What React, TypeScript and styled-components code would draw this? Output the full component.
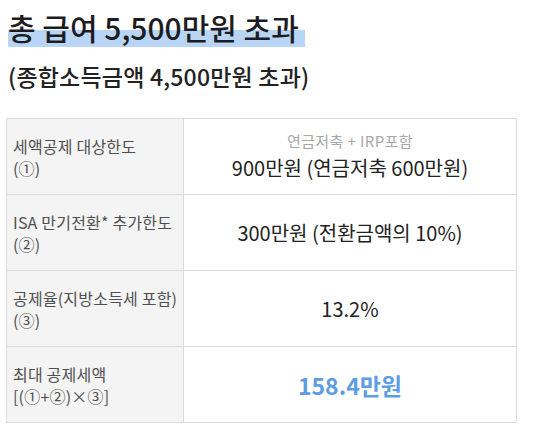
import React from "react";
import styled, { createGlobalStyle } from "styled-components";

const Global = createGlobalStyle`
  html, body { margin: 0; padding: 0; background: #fff; }
  body { font-family: "Noto Sans CJK KR", "Noto Sans", sans-serif; }
`;

const Page = styled.div`
  width: 536px;
  height: 432px;
  box-sizing: border-box;
  padding: 7px 20px 0 6px;
  display: flex;
  flex-direction: column;
`;

const Title = styled.h1`
  margin: 0 0 0 2px;
  font-size: 30px;
  font-weight: 500;
  line-height: 40px;
  color: #1d1d1f;
  letter-spacing: 0;
  align-self: flex-start;
  background: linear-gradient(transparent 57%, #b9d5f6 57%, #b9d5f6 100%);
  padding: 0 6px 0 0;
`;

const Subtitle = styled.h2`
  margin: 14px 0 0 2px;
  font-size: 23px;
  font-weight: 500;
  line-height: 30px;
  color: #222;
  letter-spacing: 0.2px;
`;

const Table = styled.div`
  margin-top: 27px;
  width: 510px;
  display: grid;
  grid-template-columns: 177px 1fr;
  border-top: 1px solid #dcdcdc;
  border-left: 1px solid #dcdcdc;
`;

const Cell = styled.div`
  height: 76px;
  box-sizing: border-box;
  border-right: 1px solid #dcdcdc;
  border-bottom: 1px solid #dcdcdc;
  display: flex;
  flex-direction: column;
  justify-content: center;
`;

const LabelCell = styled(Cell)`
  background: #f4f4f4;
  padding-left: 6px;
  font-size: 16px;
  line-height: 22px;
  color: #4f4f4f;
  letter-spacing: 0.2px;
`;

const ValueCell = styled(Cell)`
  align-items: center;
  text-align: center;
`;

const Note = styled.div`
  font-size: 15px;
  line-height: 18px;
  color: #a8a8a8;
  letter-spacing: 0.4px;
  margin-bottom: 5px;
`;

const Value = styled.div<{ $accent?: boolean }>`
  font-size: ${(p) => (p.$accent ? 23 : 20)}px;
  line-height: 26px;
  font-weight: ${(p) => (p.$accent ? 700 : 400)};
  color: ${(p) => (p.$accent ? "#5e9ce4" : "#222")};
  letter-spacing: 0;
`;

const rows = [
  { label: "세액공제 대상한도", sub: "(①)", note: "연금저축 + IRP포함", value: "900만원 (연금저축 600만원)" },
  { label: "ISA 만기전환* 추가한도", sub: "(②)", value: "300만원 (전환금액의 10%)" },
  { label: "공제율(지방소득세 포함)", sub: "(③)", value: "13.2%" },
  { label: "최대 공제세액", sub: "[(①+②)×③]", value: "158.4만원", accent: true },
];

export default function App() {
  return (
    <>
      <Global />
      <Page>
        <Title>총 급여 5,500만원 초과</Title>
        <Subtitle>(종합소득금액 4,500만원 초과)</Subtitle>
        <Table>
          {rows.map((r) => (
            <React.Fragment key={r.label}>
              <LabelCell>
                <div>{r.label}</div>
                <div>{r.sub}</div>
              </LabelCell>
              <ValueCell>
                {r.note && <Note>{r.note}</Note>}
                <Value $accent={r.accent}>{r.value}</Value>
              </ValueCell>
            </React.Fragment>
          ))}
        </Table>
      </Page>
    </>
  );
}
